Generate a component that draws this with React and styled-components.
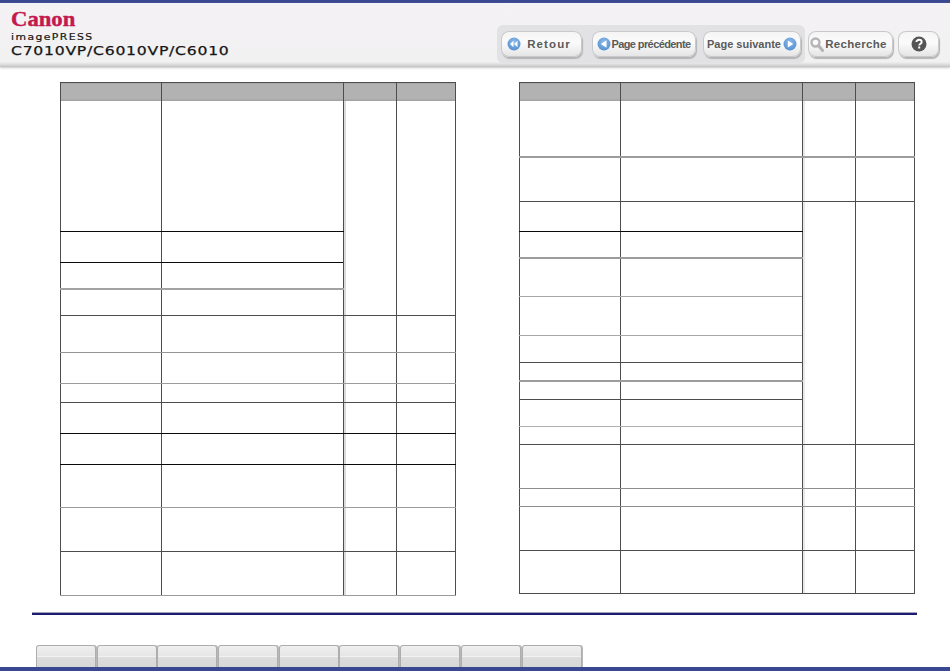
import React from "react";
import styled, { createGlobalStyle } from "styled-components";

const Global = createGlobalStyle`
  html, body { margin: 0; padding: 0; background: #fff; }
  #root { width: 950px; height: 671px; overflow: hidden; }
`;

const Page = styled.div`
  width: 950px; height: 671px; display: flex; flex-direction: column; overflow: hidden;
  background: #fff; font-family: "Liberation Sans", Arial, sans-serif;
`;
const TopBar = styled.div`height: 3px; background: #3a4892; flex: none;`;
const Header = styled.header`
  flex: none; height: 64px; box-sizing: border-box; display: flex; justify-content: space-between;
  background: linear-gradient(180deg, #f4f2f4 0%, #f2f1f2 92%, #d9d8d9 97%, #c0c0c0 100%);
  box-shadow: 0 1px 2px #c8c8c8;
`;
const Brand = styled.div`
  padding: 8px 0 0 11px; display: flex; flex-direction: column; align-items: flex-start; color: #151515;
`;
const Canon = styled.div`
  font-family: "Liberation Serif", serif; font-weight: 700; font-size: 21px; line-height: 17px;
  color: #c4194f; transform-origin: left; transform: scaleX(1.08); -webkit-text-stroke: 0.4px #c4194f;
`;
const Line = styled.div`
  font-family: "DejaVu Sans", sans-serif; font-size: 9px; line-height: 10px; margin-top: 4px;
  letter-spacing: 1.2px; transform-origin: left; transform: scaleX(1.2); -webkit-text-stroke: 0.2px #151515;
`;
const Model = styled.div`
  font-family: "DejaVu Sans", sans-serif; font-size: 12.5px; line-height: 14px; margin-top: 2px;
  letter-spacing: 0.6px; transform-origin: left; transform: scaleX(1.25); -webkit-text-stroke: 0.25px #151515;
`;
const Nav = styled.nav`display: flex; align-items: flex-start; padding: 22px 11px 0 0;`;
const Group = styled.div`
  display: flex; background: #e2e1e3; border-radius: 6px; padding: 6px 4px; margin-right: 3px;
`;
const Solo = styled.div`display: flex; gap: 5px; padding-top: 6px;`;
const Btn = styled.div`
  width: ${p => p.$w}px; height: 26px; box-sizing: border-box; display: flex; align-items: center;
  justify-content: center; gap: ${p => p.$g || 0}px; border-radius: 8px; flex: none;
  margin-left: ${p => p.$ml || 0}px; padding-right: ${p => p.$pr || 0}px;
  background: linear-gradient(180deg, #f4f4f4 0%, #fbfbfb 45%, #ececec 80%, #e4e4e4 100%);
  box-shadow: inset 0 0 0 1px #c9c9c9, 1px 2px 1px #b4b4b4;
  color: #5a5a5a; font-weight: 700; font-size: ${p => p.$fs || 11.5}px;
  letter-spacing: ${p => p.$ls || 0}px; white-space: nowrap;
`;
const Main = styled.main`
  flex: none; height: 545px; box-sizing: border-box; padding: 15px 0 0 60px; display: flex; gap: 63px;
`;
const Table = styled.table`
  width: 395px; table-layout: fixed; border-collapse: collapse; height: ${p => p.$h}px;
  border: 1px solid #4d4d4d; align-self: flex-start;
`;
const Th = styled.th`
  height: 18px; padding: 0; background: linear-gradient(180deg, #b2b2b2 0%, #b2b2b2 85%, #999 100%);
  border: 1px solid #4d4d4d; border-bottom: 0;
`;
const Td = styled.td`
  padding: 0; border-left: 1px solid #4d4d4d; border-right: 1px solid #4d4d4d;
  border-bottom: ${p => p.$bw || 1}px solid ${p => p.$b || "#4d4d4d"};
  box-shadow: ${p => (p.$shade ? `inset 2px 0 0 ${p.$shade}` : "none")};
`;
const Tr = styled.tr`height: ${p => p.$h}px;`;
const Rule = styled.div`
  flex: none; height: 2px; margin: 0 33px 0 32px; background: #1c1c74; border-top: 1px solid #a5a5b8;
`;
const Tabs = styled.div`flex: none; margin: 30px 0 0 36px; display: flex; height: 22px;`;
const Tab = styled.div`
  width: 60px; height: 22px; box-sizing: border-box; margin-right: 0.7px; border: 1px solid #adadad; border-bottom: 0;
  border-radius: 3px 3px 0 0; box-shadow: 1px 0 0 #b8b8b8;
  background: linear-gradient(180deg, #efefef 0%, #e6e6e6 45%, #f2f2f2 50%, #dcdcdc 55%, #d8d8d8 100%);
`;
const BottomBar = styled.div`flex: none; height: 4px; background: #3a4892;`;

const Cols = () => (
  <colgroup>
    <col style={{ width: 101 }} /><col style={{ width: 182 }} /><col style={{ width: 53 }} /><col style={{ width: 59 }} />
  </colgroup>
);
const Head = () => <thead><tr><Th /><Th /><Th /><Th /></tr></thead>;

const Black = "#0a0a0a", Dark = "#4d4d4d";
const left = [
  { h: 130, b: Black, span: 4, sb: Dark },
  { h: 31, b: Black, skip: true },
  { h: 27, b: "#a3a3a3", bw: 2, skip: true },
  { h: 26, b: Dark, skip: true },
  { h: 37, b: "#959595" }, { h: 31, b: "#9c9c9c" }, { h: 19, b: Dark },
  { h: 31, b: Black }, { h: 31, b: Black }, { h: 43, b: "#9c9c9c" }, { h: 44, b: Dark }, { h: 44, b: "#9c9c9c" },
];
const right = [
  { h: 56, b: "#9c9c9c", bw: 2 }, { h: 44, b: Dark },
  { h: 30, b: Black, span: 9, sb: Dark }, { h: 27, b: "#9c9c9c", bw: 2, skip: true }, { h: 38, b: "#a8a8a8", skip: true },
  { h: 39, b: "#a8a8a8", skip: true }, { h: 27, b: Dark, skip: true }, { h: 19, b: "#9c9c9c", bw: 2, skip: true },
  { h: 18, b: Dark, skip: true }, { h: 27, b: "#b0b0b0", skip: true }, { h: 18, b: Dark, skip: true },
  { h: 44, b: "#8e8e8e" }, { h: 18, b: "#8e8e8e" }, { h: 44, b: Dark }, { h: 43, b: Dark },
];

const DataTable = ({ rows, h, shade }) => (
  <Table $h={h}>
    <Cols />
    <Head />
    <tbody>
      {rows.map((r, i) => (
        <Tr key={i} $h={r.h}>
          <Td $b={r.b} $bw={r.bw} />
          <Td $b={r.b} $bw={r.bw} />
          {!r.skip && <Td rowSpan={r.span} $b={r.sb || r.b} $bw={r.bw} $shade={shade} />}
          {!r.skip && <Td rowSpan={r.span} $b={r.sb || r.b} $bw={r.bw} />}
        </Tr>
      ))}
    </tbody>
  </Table>
);

const Disc = ({ dir }) => (
  <svg width="14" height="14" viewBox="0 0 14 14" style={{ flex: "none" }}>
    <defs>
      <radialGradient id={"d" + dir} cx="0.5" cy="0.35" r="0.7">
        <stop offset="0" stopColor="#8fbbe8" /><stop offset="1" stopColor="#4f8dcf" />
      </radialGradient>
    </defs>
    <circle cx="7" cy="7" r="6.5" fill={`url(#d${dir})`} />
    {dir === "back2" && <path d="M6.5 3.8v6.4L3 7zM10.5 3.8v6.4L7 7z" fill="#fff" />}
    {dir === "left" && <path d="M9.5 3.2v7.6L3.8 7z" fill="#fff" />}
    {dir === "right" && <path d="M4.8 3.6v6.8L10.2 7z" fill="#fff" />}
  </svg>
);
const Lens = () => (
  <svg width="14" height="15" viewBox="0 0 14 15" style={{ flex: "none" }}>
    <circle cx="5.5" cy="5.5" r="4" fill="none" stroke="#b5b5b5" strokeWidth="2.4" />
    <path d="M8.5 8.5l4 5" stroke="#b5b5b5" strokeWidth="3" strokeLinecap="round" />
  </svg>
);
const Help = () => (
  <svg width="16" height="16" viewBox="0 0 16 16">
    <circle cx="8" cy="8" r="7.5" fill="#555" />
    <path d="M5.4 6.1c0-1.5 1.2-2.3 2.7-2.3s2.6.9 2.6 2.1c0 1.9-2.4 1.8-2.4 3.5" fill="none" stroke="#fff" strokeWidth="1.9" />
    <rect x="7.2" y="10.5" width="2" height="2" fill="#fff" />
  </svg>
);

export default function App() {
  return (
    <Page>
      <Global />
      <TopBar />
      <Header>
        <Brand>
          <Canon>Canon</Canon>
          <Line>imagePRESS</Line>
          <Model>C7010VP/C6010VP/C6010</Model>
        </Brand>
        <Nav>
          <Group>
            <Btn $w={81} $g={6} $fs={11.5} $ls={1.1} $pr={5}><Disc dir="back2" />Retour</Btn>
            <Btn $w={104} $ml={10} $fs={11} $ls={-0.6}><Disc dir="left" />Page précédente</Btn>
            <Btn $w={98} $ml={7} $g={2} $fs={11}>Page suivante<Disc dir="right" /></Btn>
          </Group>
          <Solo>
            <Btn $w={85} $fs={11.5} $g={1} $ls={0.3} $pr={4}><Lens />Recherche</Btn>
            <Btn $w={41}><Help /></Btn>
          </Solo>
        </Nav>
      </Header>
      <Main>
        <DataTable rows={left} h={513} shade="#dcdcdc" />
        <DataTable rows={right} h={511} shade="#e8e8e8" />
      </Main>
      <Rule />
      <Tabs>{Array.from({ length: 9 }, (_, i) => <Tab key={i} />)}</Tabs>
      <BottomBar />
    </Page>
  );
}
